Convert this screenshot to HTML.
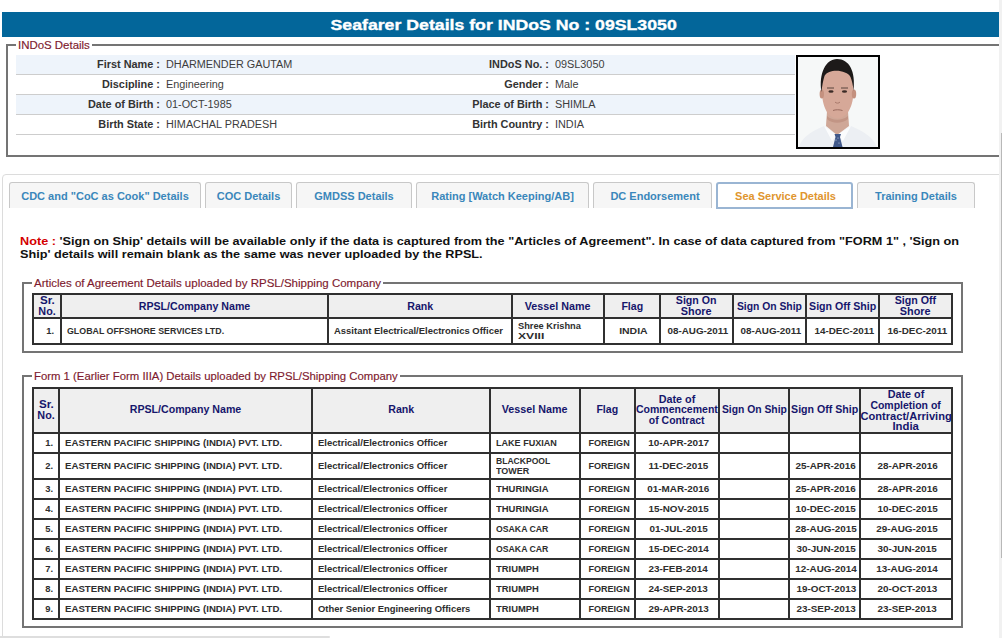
<!DOCTYPE html><html><head><meta charset="utf-8"><title>Seafarer Details</title><style>
*{box-sizing:border-box}
html,body{margin:0;padding:0}
body{width:1002px;height:638px;overflow:hidden;position:relative;background:#fff;font-family:"Liberation Sans",sans-serif}
.a{position:absolute}
.nw{white-space:nowrap}
.sx{display:inline-block;white-space:nowrap}
.hdr{left:2px;top:12px;width:997px;height:24.6px;background:#03669a}
.title{color:#fff;-webkit-text-stroke:0.35px #fff;font-weight:bold;font-size:15.3px;line-height:25px;top:12px;left:0;width:1007px;text-align:center}
.fs{border:2px solid #747474}
.leg{color:#7e1a2e;-webkit-text-stroke:0.15px #7e1a2e;background:#fff;padding:0 2px;line-height:14px}
.row{left:16px;width:779px;height:20px;border-bottom:1px solid #cdcdcd}
.row.alt{background:#eef4fb}
.lab{font-weight:bold;color:#333;font-size:10.9px;line-height:19px;text-align:right}
.val{color:#3d3d3d;font-size:10.85px;line-height:19px}
.tabbox{left:2px;top:174px;width:1010px;height:500px;border:1px solid #dcdcdc;border-radius:4px}
.tab{top:182px;height:26px;background:#f6f6f6;border:1px solid #c8c8c8;border-bottom:none;border-radius:3px 3px 0 0;color:#3a87bb;font-weight:bold;font-size:11px;line-height:26px;text-align:center;white-space:nowrap}
.tab.act{background:#fff;border:2px solid #9ab5d3;height:27px;color:#e0952e;line-height:24px;padding-left:2px}
table.t{position:absolute;border-collapse:separate;border-spacing:0;border:1px solid #303030;table-layout:fixed}
table.t td{border:1px solid #303030;padding:0;overflow:visible;white-space:nowrap;vertical-align:middle;color:#2e2e2e;font-weight:bold;font-size:8.4px;line-height:10px}
table.t tr.h td{background:#efefef;color:#16166c;font-size:10px;text-align:center;line-height:10.6px}
.c{text-align:center}.r{text-align:right}.l{text-align:left}
</style></head><body>
<div class="a hdr"></div>
<div class="a title"><span class="sx" style="transform:scaleX(1.157)">Seafarer Details for INDoS No : 09SL3050</span></div>
<div class="a fs" style="left:6px;top:44px;width:1010px;height:112.5px"></div>
<div class="a leg" style="left:16px;top:38px;font-size:11.45px">INDoS Details</div>
<div class="a row alt" style="top:55px"></div>
<div class="a lab nw" style="top:55px;left:0;width:160px">First Name :</div>
<div class="a val nw" style="top:55px;left:166px">DHARMENDER GAUTAM</div>
<div class="a lab nw" style="top:55px;left:400px;width:149px">INDoS No. :</div>
<div class="a val nw" style="top:55px;left:555px">09SL3050</div>
<div class="a row" style="top:75px"></div>
<div class="a lab nw" style="top:75px;left:0;width:160px">Discipline :</div>
<div class="a val nw" style="top:75px;left:166px">Engineering</div>
<div class="a lab nw" style="top:75px;left:400px;width:149px">Gender :</div>
<div class="a val nw" style="top:75px;left:555px">Male</div>
<div class="a row alt" style="top:95px"></div>
<div class="a lab nw" style="top:95px;left:0;width:160px">Date of Birth :</div>
<div class="a val nw" style="top:95px;left:166px">01-OCT-1985</div>
<div class="a lab nw" style="top:95px;left:400px;width:149px">Place of Birth :</div>
<div class="a val nw" style="top:95px;left:555px">SHIMLA</div>
<div class="a row" style="top:115px"></div>
<div class="a lab nw" style="top:115px;left:0;width:160px">Birth State :</div>
<div class="a val nw" style="top:115px;left:166px">HIMACHAL PRADESH</div>
<div class="a lab nw" style="top:115px;left:400px;width:149px">Birth Country :</div>
<div class="a val nw" style="top:115px;left:555px">INDIA</div>
<svg class="a" style="left:796px;top:55px" width="84" height="94" viewBox="0 0 84 94">
<rect x="1" y="1" width="82" height="92" fill="#f6f8f8" stroke="#000" stroke-width="2"/>
<path d="M3 92 C6 82 16 76 28 71 L41 80 L55 71 C67 76 77 82 81 92 Z" fill="#eceff3"/>
<path d="M28 71 L41 80 L36 86 Z M55 71 L41 80 L47 86 Z" fill="#fbfcfd"/>
<path d="M31 56 L52 56 L53 71 L41 80 L30 71 Z" fill="#cfa797"/>
<path d="M31 61 C36 66 46 66 52 61 L52 64 C46 69 36 69 31 64 Z" fill="#c29585"/>
<path d="M38.5 79 L45 79 L44 82 L46.5 92 L37 92 L39.5 82 Z" fill="#41598a"/>
<circle cx="40" cy="85" r="0.6" fill="#c8d2e6"/><circle cx="43" cy="88" r="0.6" fill="#c8d2e6"/><circle cx="42" cy="83" r="0.6" fill="#c8d2e6"/>
<path d="M26 36 C25 22 30 13 41.5 13 C53 13 58 22 57.5 36 C57.5 50 52 63 41.5 63.5 C31 63 26 50 26 36 Z" fill="#d6a898"/>
<ellipse cx="25.8" cy="39" rx="2.2" ry="4.5" fill="#c4917f"/>
<ellipse cx="58" cy="39" rx="2.2" ry="4.5" fill="#c4917f"/>
<path d="M25.5 37 C22.5 18 30 4 41 4 C53 4 60 16 57.5 36 C57 30 56 26 54.5 22 C51 15 33 13 28.5 21 C27 26 26 31 25.5 37 Z" fill="#1d1a19"/>
<ellipse cx="35" cy="36.5" rx="2.6" ry="1.2" fill="#3b2b26"/>
<ellipse cx="48.5" cy="36.5" rx="2.6" ry="1.2" fill="#3b2b26"/>
<path d="M31 33 h7 M45 33 h7" stroke="#4a3832" stroke-width="0.9"/>
<path d="M39 47 C40 48.5 43 48.5 44 47" stroke="#a97a6c" stroke-width="1" fill="none"/>
<path d="M37 55.5 C39.5 54.5 43.5 54.5 46.5 55.5" stroke="#9a6a5e" stroke-width="1" fill="none"/>
</svg>
<div class="a tabbox"></div>
<div class="a tab" style="left:9px;width:192px;">CDC and "CoC as Cook" Details</div>
<div class="a tab" style="left:205px;width:87px;">COC Details</div>
<div class="a tab" style="left:296px;width:116px;">GMDSS Details</div>
<div class="a tab" style="left:416px;width:173px;">Rating [Watch Keeping/AB]</div>
<div class="a tab" style="left:593px;width:119px;padding-left:5px;">DC Endorsement</div>
<div class="a tab act" style="left:716px;width:137px;">Sea Service Details</div>
<div class="a tab" style="left:857px;width:118px;">Training Details</div>
<div class="a nw" style="left:20px;top:235px;font-size:10.75px;font-weight:bold;color:#111;line-height:13px"><span class="sx" style="transform:scaleX(1.18);transform-origin:0 0"><span style="color:#d40000">Note : </span>'Sign on Ship' details will be available only if the data is captured from the "Articles of Agreement". In case of data captured from "FORM 1" , 'Sign on</span></div>
<div class="a nw" style="left:20px;top:248px;font-size:10.75px;font-weight:bold;color:#111;line-height:13px"><span class="sx" style="transform:scaleX(1.18);transform-origin:0 0">Ship' details will remain blank as the same was never uploaded by the RPSL.</span></div>
<div class="a fs" style="left:22px;top:282px;width:941px;height:71px"></div>
<div class="a leg" style="left:32px;top:276px;font-size:11.5px">Articles of Agreement Details uploaded by RPSL/Shipping Company</div>
<table class="t" style="left:32px;top:293px"><colgroup><col style="width:28px"><col style="width:267px"><col style="width:184px"><col style="width:92px"><col style="width:56px"><col style="width:73px"><col style="width:73px"><col style="width:73px"><col style="width:73px"></colgroup><tr class="h" style="height:24px"><td class="c" style="line-height:11px"><div><span class="sx" style="transform:scaleX(1.158);transform-origin:50% 50%">Sr.</span></div><div><span class="sx" style="transform:scaleX(1.08);transform-origin:50% 50%">No.</span></div></td><td class="c" style="line-height:11px"><div><span class="sx" style="transform:scaleX(1.062);transform-origin:50% 50%">RPSL/Company Name</span></div></td><td class="c" style="line-height:11px"><div><span class="sx" style="transform:scaleX(1.062);transform-origin:50% 50%">Rank</span></div></td><td class="c" style="line-height:11px"><div><span class="sx" style="transform:scaleX(1.073);transform-origin:50% 50%">Vessel Name</span></div></td><td class="c" style="line-height:11px"><div><span class="sx" style="transform:scaleX(1.058);transform-origin:50% 50%">Flag</span></div></td><td class="c" style="line-height:11px"><div><span class="sx" style="transform:scaleX(1.062);transform-origin:50% 50%">Sign On</span></div><div><span class="sx" style="transform:scaleX(1.085);transform-origin:50% 50%">Shore</span></div></td><td class="c" style="line-height:11px"><div><span class="sx" style="transform:scaleX(1.035);transform-origin:50% 50%">Sign On Ship</span></div></td><td class="c" style="line-height:11px"><div><span class="sx" style="transform:scaleX(1.061);transform-origin:50% 50%">Sign Off Ship</span></div></td><td class="c" style="line-height:11px"><div><span class="sx" style="transform:scaleX(1.066);transform-origin:50% 50%">Sign Off</span></div><div><span class="sx" style="transform:scaleX(1.085);transform-origin:50% 50%">Shore</span></div></td></tr><tr class="d" style="height:26px"><td class="r" style="padding-right:6px"><span class="sx" style="transform:scaleX(1.12);transform-origin:100% 50%">1.</span></td><td class="l" style="padding-left:5px"><span class="sx" style="transform:scaleX(1.055);transform-origin:0 50%">GLOBAL OFFSHORE SERVICES LTD.</span></td><td class="l" style="padding-left:5px"><span class="sx" style="transform:scaleX(1.13);transform-origin:0 50%">Assitant Electrical/Electronics Officer</span></td><td class="l" style="padding-left:5px"><div><span class="sx" style="transform:scaleX(1.107);transform-origin:0 50%">Shree Krishna</span></div><div><span class="sx" style="transform:scaleX(1.447);transform-origin:0 50%">XVIII</span></div></td><td class="c" style="padding-left:3px"><span class="sx" style="transform:scaleX(1.25);transform-origin:50% 50%">INDIA</span></td><td class="c" style="padding-left:3px"><span class="sx" style="transform:scaleX(1.176);transform-origin:50% 50%">08-AUG-2011</span></td><td class="c" style="padding-left:3px"><span class="sx" style="transform:scaleX(1.176);transform-origin:50% 50%">08-AUG-2011</span></td><td class="c" style="padding-left:3px"><span class="sx" style="transform:scaleX(1.178);transform-origin:50% 50%">14-DEC-2011</span></td><td class="c" style="padding-left:3px"><span class="sx" style="transform:scaleX(1.18);transform-origin:50% 50%">16-DEC-2011</span></td></tr></table>
<div class="a fs" style="left:22px;top:375px;width:941px;height:253px"></div>
<div class="a leg" style="left:32px;top:369px;font-size:11.35px">Form 1 (Earlier Form IIIA) Details uploaded by RPSL/Shipping Company</div>
<table class="t" style="left:32px;top:387px"><colgroup><col style="width:26px"><col style="width:253px"><col style="width:178px"><col style="width:90px"><col style="width:55px"><col style="width:84px"><col style="width:70px"><col style="width:71px"><col style="width:92px"></colgroup><tr class="h" style="height:45px"><td class="c"><div><span class="sx" style="transform:scaleX(1.158);transform-origin:50% 50%">Sr.</span></div><div><span class="sx" style="transform:scaleX(1.08);transform-origin:50% 50%">No.</span></div></td><td class="c"><div><span class="sx" style="transform:scaleX(1.062);transform-origin:50% 50%">RPSL/Company Name</span></div></td><td class="c"><div><span class="sx" style="transform:scaleX(1.062);transform-origin:50% 50%">Rank</span></div></td><td class="c"><div><span class="sx" style="transform:scaleX(1.073);transform-origin:50% 50%">Vessel Name</span></div></td><td class="c"><div><span class="sx" style="transform:scaleX(1.058);transform-origin:50% 50%">Flag</span></div></td><td class="c"><div><span class="sx" style="transform:scaleX(1.079);transform-origin:50% 50%">Date of</span></div><div><span class="sx" style="transform:scaleX(1.053);transform-origin:50% 50%">Commencement</span></div><div><span class="sx" style="transform:scaleX(1.043);transform-origin:50% 50%">of Contract</span></div></td><td class="c"><div><span class="sx" style="transform:scaleX(1.035);transform-origin:50% 50%">Sign On Ship</span></div></td><td class="c"><div><span class="sx" style="transform:scaleX(1.061);transform-origin:50% 50%">Sign Off Ship</span></div></td><td class="c"><div style="position:relative;top:1px"><span class="sx" style="transform:scaleX(1.079);transform-origin:50% 50%">Date of</span></div><div style="position:relative;top:1px"><span class="sx" style="transform:scaleX(1.048);transform-origin:50% 50%">Completion of</span></div><div style="position:relative;top:1px"><span class="sx" style="transform:scaleX(1.11);transform-origin:50% 50%">Contract/Arriving</span></div><div style="position:relative;top:1px"><span class="sx" style="transform:scaleX(1.135);transform-origin:50% 50%">India</span></div></td></tr><tr class="d" style="height:20px"><td class="r" style="padding-right:5px"><span class="sx" style="transform:scaleX(1.12);transform-origin:100% 50%">1.</span></td><td class="l" style="padding-left:5px"><span class="sx" style="transform:scaleX(1.151);transform-origin:0 50%">EASTERN PACIFIC SHIPPING (INDIA) PVT. LTD.</span></td><td class="l" style="padding-left:5px"><span class="sx" style="transform:scaleX(1.134);transform-origin:0 50%">Electrical/Electronics Officer</span></td><td class="l" style="padding-left:5px"><span class="sx" style="transform:scaleX(1.082);transform-origin:0 50%">LAKE FUXIAN</span></td><td class="c" style="padding-left:3px"><span class="sx" style="transform:scaleX(1.081);transform-origin:50% 50%">FOREIGN</span></td><td class="c" style="padding-left:3px"><span class="sx" style="transform:scaleX(1.19);transform-origin:50% 50%">10-APR-2017</span></td><td></td><td></td><td></td></tr><tr class="d" style="height:26px"><td class="r" style="padding-right:5px"><span class="sx" style="transform:scaleX(1.12);transform-origin:100% 50%">2.</span></td><td class="l" style="padding-left:5px"><span class="sx" style="transform:scaleX(1.151);transform-origin:0 50%">EASTERN PACIFIC SHIPPING (INDIA) PVT. LTD.</span></td><td class="l" style="padding-left:5px"><span class="sx" style="transform:scaleX(1.134);transform-origin:0 50%">Electrical/Electronics Officer</span></td><td class="l" style="padding-left:5px"><div><span class="sx" style="transform:scaleX(1.023);transform-origin:0 50%">BLACKPOOL</span></div><div><span class="sx" style="transform:scaleX(1.073);transform-origin:0 50%">TOWER</span></div></td><td class="c" style="padding-left:3px"><span class="sx" style="transform:scaleX(1.081);transform-origin:50% 50%">FOREIGN</span></td><td class="c" style="padding-left:3px"><span class="sx" style="transform:scaleX(1.18);transform-origin:50% 50%">11-DEC-2015</span></td><td></td><td class="c" style="padding-left:3px"><span class="sx" style="transform:scaleX(1.18);transform-origin:50% 50%">25-APR-2016</span></td><td class="c" style="padding-left:3px"><span class="sx" style="transform:scaleX(1.18);transform-origin:50% 50%">28-APR-2016</span></td></tr><tr class="d" style="height:20px"><td class="r" style="padding-right:5px"><span class="sx" style="transform:scaleX(1.12);transform-origin:100% 50%">3.</span></td><td class="l" style="padding-left:5px"><span class="sx" style="transform:scaleX(1.151);transform-origin:0 50%">EASTERN PACIFIC SHIPPING (INDIA) PVT. LTD.</span></td><td class="l" style="padding-left:5px"><span class="sx" style="transform:scaleX(1.134);transform-origin:0 50%">Electrical/Electronics Officer</span></td><td class="l" style="padding-left:5px"><span class="sx" style="transform:scaleX(1.13);transform-origin:0 50%">THURINGIA</span></td><td class="c" style="padding-left:3px"><span class="sx" style="transform:scaleX(1.081);transform-origin:50% 50%">FOREIGN</span></td><td class="c" style="padding-left:3px"><span class="sx" style="transform:scaleX(1.18);transform-origin:50% 50%">01-MAR-2016</span></td><td></td><td class="c" style="padding-left:3px"><span class="sx" style="transform:scaleX(1.18);transform-origin:50% 50%">25-APR-2016</span></td><td class="c" style="padding-left:3px"><span class="sx" style="transform:scaleX(1.18);transform-origin:50% 50%">28-APR-2016</span></td></tr><tr class="d" style="height:20px"><td class="r" style="padding-right:5px"><span class="sx" style="transform:scaleX(1.12);transform-origin:100% 50%">4.</span></td><td class="l" style="padding-left:5px"><span class="sx" style="transform:scaleX(1.151);transform-origin:0 50%">EASTERN PACIFIC SHIPPING (INDIA) PVT. LTD.</span></td><td class="l" style="padding-left:5px"><span class="sx" style="transform:scaleX(1.134);transform-origin:0 50%">Electrical/Electronics Officer</span></td><td class="l" style="padding-left:5px"><span class="sx" style="transform:scaleX(1.13);transform-origin:0 50%">THURINGIA</span></td><td class="c" style="padding-left:3px"><span class="sx" style="transform:scaleX(1.081);transform-origin:50% 50%">FOREIGN</span></td><td class="c" style="padding-left:3px"><span class="sx" style="transform:scaleX(1.18);transform-origin:50% 50%">15-NOV-2015</span></td><td></td><td class="c" style="padding-left:3px"><span class="sx" style="transform:scaleX(1.18);transform-origin:50% 50%">10-DEC-2015</span></td><td class="c" style="padding-left:3px"><span class="sx" style="transform:scaleX(1.18);transform-origin:50% 50%">10-DEC-2015</span></td></tr><tr class="d" style="height:20px"><td class="r" style="padding-right:5px"><span class="sx" style="transform:scaleX(1.12);transform-origin:100% 50%">5.</span></td><td class="l" style="padding-left:5px"><span class="sx" style="transform:scaleX(1.151);transform-origin:0 50%">EASTERN PACIFIC SHIPPING (INDIA) PVT. LTD.</span></td><td class="l" style="padding-left:5px"><span class="sx" style="transform:scaleX(1.134);transform-origin:0 50%">Electrical/Electronics Officer</span></td><td class="l" style="padding-left:5px"><span class="sx" style="transform:scaleX(1.039);transform-origin:0 50%">OSAKA CAR</span></td><td class="c" style="padding-left:3px"><span class="sx" style="transform:scaleX(1.081);transform-origin:50% 50%">FOREIGN</span></td><td class="c" style="padding-left:3px"><span class="sx" style="transform:scaleX(1.18);transform-origin:50% 50%">01-JUL-2015</span></td><td></td><td class="c" style="padding-left:3px"><span class="sx" style="transform:scaleX(1.18);transform-origin:50% 50%">28-AUG-2015</span></td><td class="c" style="padding-left:3px"><span class="sx" style="transform:scaleX(1.18);transform-origin:50% 50%">29-AUG-2015</span></td></tr><tr class="d" style="height:20px"><td class="r" style="padding-right:5px"><span class="sx" style="transform:scaleX(1.12);transform-origin:100% 50%">6.</span></td><td class="l" style="padding-left:5px"><span class="sx" style="transform:scaleX(1.151);transform-origin:0 50%">EASTERN PACIFIC SHIPPING (INDIA) PVT. LTD.</span></td><td class="l" style="padding-left:5px"><span class="sx" style="transform:scaleX(1.134);transform-origin:0 50%">Electrical/Electronics Officer</span></td><td class="l" style="padding-left:5px"><span class="sx" style="transform:scaleX(1.039);transform-origin:0 50%">OSAKA CAR</span></td><td class="c" style="padding-left:3px"><span class="sx" style="transform:scaleX(1.081);transform-origin:50% 50%">FOREIGN</span></td><td class="c" style="padding-left:3px"><span class="sx" style="transform:scaleX(1.18);transform-origin:50% 50%">15-DEC-2014</span></td><td></td><td class="c" style="padding-left:3px"><span class="sx" style="transform:scaleX(1.18);transform-origin:50% 50%">30-JUN-2015</span></td><td class="c" style="padding-left:3px"><span class="sx" style="transform:scaleX(1.18);transform-origin:50% 50%">30-JUN-2015</span></td></tr><tr class="d" style="height:20px"><td class="r" style="padding-right:5px"><span class="sx" style="transform:scaleX(1.12);transform-origin:100% 50%">7.</span></td><td class="l" style="padding-left:5px"><span class="sx" style="transform:scaleX(1.151);transform-origin:0 50%">EASTERN PACIFIC SHIPPING (INDIA) PVT. LTD.</span></td><td class="l" style="padding-left:5px"><span class="sx" style="transform:scaleX(1.134);transform-origin:0 50%">Electrical/Electronics Officer</span></td><td class="l" style="padding-left:5px"><span class="sx" style="transform:scaleX(1.122);transform-origin:0 50%">TRIUMPH</span></td><td class="c" style="padding-left:3px"><span class="sx" style="transform:scaleX(1.081);transform-origin:50% 50%">FOREIGN</span></td><td class="c" style="padding-left:3px"><span class="sx" style="transform:scaleX(1.18);transform-origin:50% 50%">23-FEB-2014</span></td><td></td><td class="c" style="padding-left:3px"><span class="sx" style="transform:scaleX(1.18);transform-origin:50% 50%">12-AUG-2014</span></td><td class="c" style="padding-left:3px"><span class="sx" style="transform:scaleX(1.18);transform-origin:50% 50%">13-AUG-2014</span></td></tr><tr class="d" style="height:20px"><td class="r" style="padding-right:5px"><span class="sx" style="transform:scaleX(1.12);transform-origin:100% 50%">8.</span></td><td class="l" style="padding-left:5px"><span class="sx" style="transform:scaleX(1.151);transform-origin:0 50%">EASTERN PACIFIC SHIPPING (INDIA) PVT. LTD.</span></td><td class="l" style="padding-left:5px"><span class="sx" style="transform:scaleX(1.134);transform-origin:0 50%">Electrical/Electronics Officer</span></td><td class="l" style="padding-left:5px"><span class="sx" style="transform:scaleX(1.122);transform-origin:0 50%">TRIUMPH</span></td><td class="c" style="padding-left:3px"><span class="sx" style="transform:scaleX(1.081);transform-origin:50% 50%">FOREIGN</span></td><td class="c" style="padding-left:3px"><span class="sx" style="transform:scaleX(1.18);transform-origin:50% 50%">24-SEP-2013</span></td><td></td><td class="c" style="padding-left:3px"><span class="sx" style="transform:scaleX(1.18);transform-origin:50% 50%">19-OCT-2013</span></td><td class="c" style="padding-left:3px"><span class="sx" style="transform:scaleX(1.18);transform-origin:50% 50%">20-OCT-2013</span></td></tr><tr class="d" style="height:20px"><td class="r" style="padding-right:5px"><span class="sx" style="transform:scaleX(1.12);transform-origin:100% 50%">9.</span></td><td class="l" style="padding-left:5px"><span class="sx" style="transform:scaleX(1.151);transform-origin:0 50%">EASTERN PACIFIC SHIPPING (INDIA) PVT. LTD.</span></td><td class="l" style="padding-left:5px"><span class="sx" style="transform:scaleX(1.125);transform-origin:0 50%">Other Senior Engineering Officers</span></td><td class="l" style="padding-left:5px"><span class="sx" style="transform:scaleX(1.122);transform-origin:0 50%">TRIUMPH</span></td><td class="c" style="padding-left:3px"><span class="sx" style="transform:scaleX(1.081);transform-origin:50% 50%">FOREIGN</span></td><td class="c" style="padding-left:3px"><span class="sx" style="transform:scaleX(1.18);transform-origin:50% 50%">29-APR-2013</span></td><td></td><td class="c" style="padding-left:3px"><span class="sx" style="transform:scaleX(1.18);transform-origin:50% 50%">23-SEP-2013</span></td><td class="c" style="padding-left:3px"><span class="sx" style="transform:scaleX(1.18);transform-origin:50% 50%">23-SEP-2013</span></td></tr></table>
<div class="a" style="left:999px;top:0;width:3px;height:638px;background:#f1f1f1"></div>
<div class="a" style="left:1001px;top:133px;width:1px;height:425px;background:#b8b8b8"></div>
<div class="a" style="left:0;top:636px;width:330px;height:2px;background:#dedede;border-radius:0 2px 2px 0"></div>
</body></html>
